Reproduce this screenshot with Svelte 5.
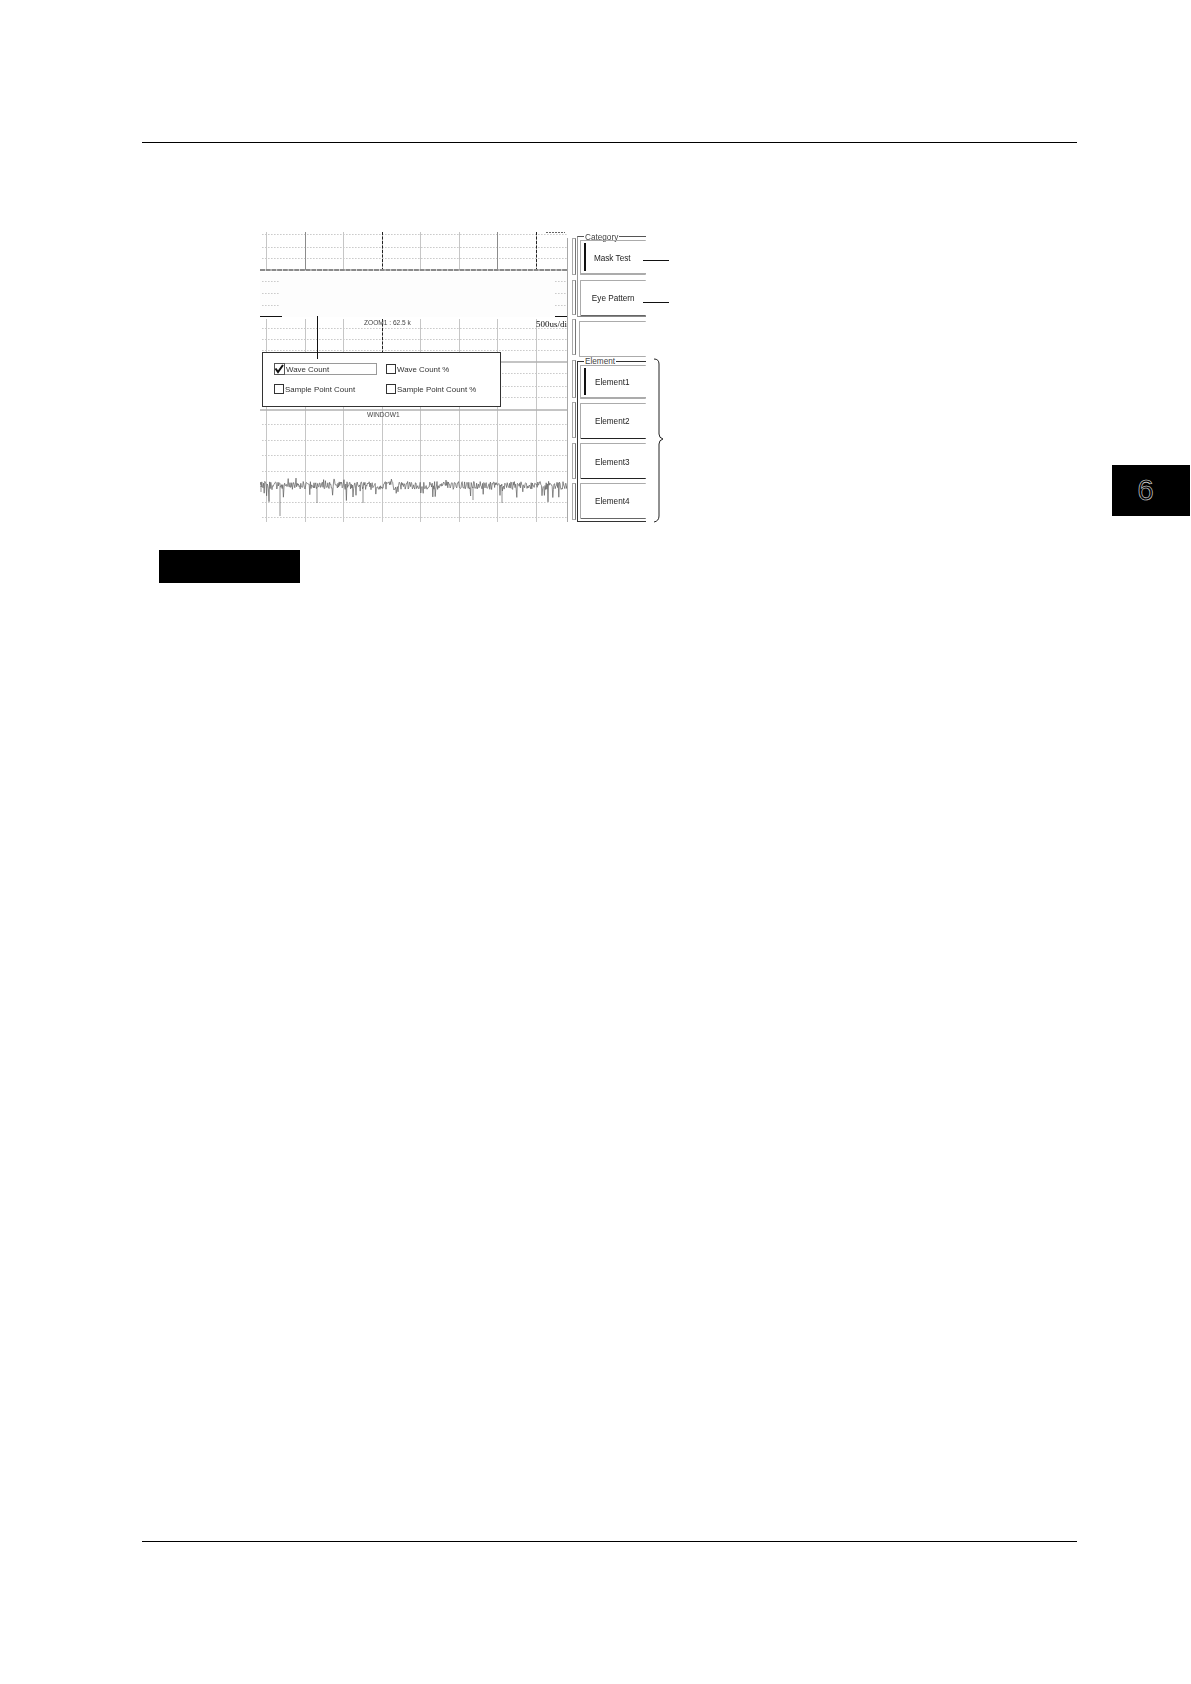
<script>
  const gridX = [266.5, 305.5, 343.5, 382.5, 420.5, 459.5, 497.5, 536.5];
  const dotsTop = [234.5, 247.5, 258.5];
  const dotsMid = [328.5, 339.5, 350.5];
  const dotsRight = [373.5, 386.5, 397.5];
  const dotsLow = [424.5, 440.5, 455.5, 471.5, 502.5, 517.5];
  const dotsBlank = [281.5, 293.5, 305.5];

  let seed = 12345;
  const rnd = () => {
    seed = (seed * 16807) % 2147483647;
    return seed / 2147483647;
  };
  let wave = 'M260 485';
  for (let x = 260.6; x < 568; x += 0.6) {
    let y = 485.5 + (rnd() - 0.5) * 8;
    const r = rnd();
    if (r > 0.93) y += 4 + rnd() * 9;
    else if (r < 0.06) y -= 2 + rnd() * 3;
    wave += ` L${x.toFixed(1)} ${y.toFixed(1)}`;
  }
  wave += ' M280 486 L280 516 M261 486 L261 492 M317 487 L317 503 M363 487 L363 503 M473 487 L473 500 M502 487 L502 503';

  const options = [
    { label: 'Wave Count', checked: true, focus: true },
    { label: 'Wave Count %' },
    { label: 'Sample Point Count' },
    { label: 'Sample Point Count %' }
  ];
  const stacks = [37, 35, 36, 38, 36, 36, 37];
</script>

<div class="page">
  <div class="rule"></div>

  <div class="figure">
    <div class="scope">
      <svg class="trace" viewBox="260 232 308 290" width="308" height="290">
        {#each dotsTop as y}<line class="dots" x1="262" x2="568" y1={y} y2={y} />{/each}
        {#each dotsMid as y}<line class="dots" x1="262" x2="568" y1={y} y2={y} />{/each}
        {#each dotsRight as y}<line class="dots" x1="502" x2="568" y1={y} y2={y} />{/each}
        {#each dotsLow as y}<line class="dots" x1="262" x2="568" y1={y} y2={y} />{/each}
        {#each gridX as x, i}
          <line class={i === 1 || i === 6 ? 'grid strong' : 'grid'} x1={x} x2={x} y1="232" y2="270" />
          <line class="grid" x1={x} x2={x} y1="319" y2="352" />
          <line class="grid" x1={x} x2={x} y1="406" y2="522" />
        {/each}
        <line class="grid" x1="536.5" x2="536.5" y1="352" y2="410" />
        <line class="cut" x1="382.5" x2="382.5" y1="232" y2="270" />
        <line class="cut" x1="536.5" x2="536.5" y1="232" y2="270" />
        <line class="cut" x1="382.5" x2="382.5" y1="319" y2="352" />
        <line class="scrap" x1="546" x2="565" y1="232.5" y2="232.5" />
        <line class="divider heavy" x1="260" x2="568" y1="270" y2="270" />
        <line class="divider" x1="500" x2="568" y1="362" y2="362" />
        <line class="divider" x1="260" x2="568" y1="410" y2="410" />
        <rect class="blank" x="260" y="272" width="308" height="45" />
        {#each dotsBlank as y}
          <line class="dots" x1="262" x2="280" y1={y} y2={y} />
          <line class="dots" x1="555" x2="568" y1={y} y2={y} />
        {/each}
        <path class="wave" d={wave} />
        <text class="tiny" x="364" y="325">ZOOM1 : 62.5 k</text>
        <text class="tiny" x="367" y="417">WINDOW1</text>
        <text class="div" x="536" y="327">500us/di</text>
        <line class="ink" x1="260" x2="282" y1="316.5" y2="316.5" />
        <line class="ink" x1="555" x2="568" y1="316.5" y2="316.5" />
      </svg>

      <div class="dialog">
        {#each options as o}
          <div class="option" class:focus={o.focus}>
            <span class="box">
              {#if o.checked}
                <svg viewBox="0 0 10 10" width="10" height="10"><path d="M1.5 4.5 L4 8 L9 1" /></svg>
              {/if}
            </span>
            <span>{o.label}</span>
          </div>
        {/each}
      </div>
      <div class="leader"></div>
    </div>

    <div class="rail">
      {#each stacks as h}
        <div class="stub" style="height: {h}px"></div>
      {/each}
    </div>

    <div class="keys">
      <div class="group category">
        <span class="legend">Category</span>
        <div class="key selected low"><i></i>Mask Test</div>
        <div class="key dark-gray nudge">Eye Pattern</div>
      </div>
      <div class="key empty"></div>
      <div class="group element">
        <span class="legend">Element</span>
        <div class="key selected"><i></i><span class="lift">Element1</span></div>
        <div class="key black">Element2</div>
        <div class="key black"><span class="lift">Element3</span></div>
        <div class="key dark-gray">Element4</div>
      </div>
    </div>

    <svg class="notes" viewBox="640 232 32 290" width="32" height="290">
      <line x1="643" x2="669" y1="260.5" y2="260.5" />
      <line x1="643" x2="669" y1="302.5" y2="302.5" />
    </svg>
    <svg class="brace" viewBox="650 355 18 170" width="18" height="170">
      <path d="M654 359 Q659 359 659 364 L659 434 Q659 438 663 439 Q659 440 659 444 L659 516 Q659 521 654 522" />
    </svg>
  </div>

  <div class="bar"></div>
  <div class="rule bottom"></div>

  <div class="tab"><span>6</span></div>
</div>

<style>
  :global(body) {
    margin: 0;
    background: #fff;
  }
  .page {
    position: relative;
    box-sizing: border-box;
    height: 1684px;
    padding: 142px 0;
    display: flex;
    flex-direction: column;
    font-family: "Liberation Sans", Arial, sans-serif;
    color: #222;
    overflow: hidden;
  }
  .rule {
    width: 935px;
    height: 1px;
    margin-left: 142px;
    background: #000;
    flex: none;
  }
  .bottom {
    margin-top: auto;
  }
  .figure {
    position: relative;
    display: flex;
    margin: 89px 0 0 260px;
    height: 290px;
    width: 412px;
    flex: none;
    filter: blur(0.35px);
  }
  .scope {
    position: relative;
    width: 307px;
    flex: none;
  }
  .trace {
    display: block;
  }
  .dots {
    stroke: #cbcbcb;
    stroke-width: 1;
    stroke-dasharray: 1.6 1.4;
  }
  .grid {
    stroke: #c6c6c6;
    stroke-width: 1;
  }
  .grid.strong {
    stroke: #8c8c8c;
  }
  .cut {
    stroke: #222;
    stroke-width: 1;
    stroke-dasharray: 3 1.5;
  }
  .scrap {
    stroke: #666;
    stroke-width: 1;
    stroke-dasharray: 2 1;
  }
  .divider {
    stroke: #b0b0b0;
    stroke-width: 1.5;
  }
  .divider.heavy {
    stroke: #8a8a8a;
    stroke-width: 2;
    stroke-dasharray: 5 0.7;
  }
  .blank {
    fill: #fdfdfd;
  }
  .wave {
    fill: none;
    stroke: #5f5f5f;
    stroke-width: 0.7;
  }
  .ink {
    stroke: #111;
    stroke-width: 1;
  }
  .leader {
    position: absolute;
    left: 57px;
    top: 84px;
    width: 1px;
    height: 43px;
    background: #111;
  }
  .tiny {
    font-family: "Liberation Sans", Arial, sans-serif;
    font-size: 6.6px;
    fill: #444;
  }
  .div {
    font-family: "Liberation Serif", "Times New Roman", serif;
    font-size: 9px;
    fill: #111;
  }
  .dialog {
    position: absolute;
    left: 2px;
    top: 120px;
    box-sizing: border-box;
    width: 239px;
    height: 55px;
    padding: 10px 0 0 11px;
    background: #fff;
    border: 1.5px solid #333;
    display: grid;
    grid-template-columns: 112px 1fr;
    grid-auto-rows: 20px;
    font-size: 7.9px;
    color: #333;
  }
  .option {
    display: flex;
    align-items: center;
    gap: 1px;
    height: 12px;
    white-space: nowrap;
  }
  .option.focus {
    width: 103px;
    margin-right: 9px;
    box-shadow: inset 0 0 0 1px #9a9a9a;
  }
  .box {
    box-sizing: border-box;
    width: 10px;
    height: 10px;
    border: 1px solid #333;
    background: #fff;
    flex: none;
    display: flex;
  }
  .option.focus .box {
    width: 11px;
    height: 12px;
    border: 1.5px solid #555;
    align-items: center;
  }
  .box svg {
    margin-left: -1px;
  }
  .box path {
    fill: none;
    stroke: #111;
    stroke-width: 2;
  }
  .rail {
    box-sizing: border-box;
    width: 10px;
    margin-top: 6px;
    padding-left: 4px;
    height: 284px;
    border-left: 1.5px solid #a8a8a8;
    flex: none;
    display: flex;
    flex-direction: column;
    gap: 4.5px;
    position: relative;
  }
  .stub {
    width: 4px;
    box-sizing: border-box;
    border: 1px solid #aaa;
    border-right-color: #777;
    flex: none;
  }
  .keys {
    width: 69px;
    flex: none;
    overflow: hidden;
    padding-top: 4px;
    display: flex;
    flex-direction: column;
    font-size: 8.2px;
    color: #222;
  }
  .group {
    position: relative;
    box-sizing: border-box;
    border: 1.5px solid #333;
    border-right: none;
    padding: 3px 0 1px 1.5px;
    display: flex;
    flex-direction: column;
    gap: 5px;
  }
  .category {
    height: 81px;
    border-color: #555;
    border-left-color: #999;
    border-bottom-color: #888;
  }
  .element {
    height: 162px;
    margin-top: 4px;
    border-color: #333;
    gap: 4px;
  }
  .legend {
    position: absolute;
    left: 6px;
    top: -4.5px;
    padding: 0 1px;
    height: 10px;
    line-height: 10px;
    background: #fff;
    color: #444;
  }
  .element .legend {
    top: -5.5px;
  }
  .key {
    position: relative;
    box-sizing: border-box;
    height: 36px;
    flex: none;
    display: flex;
    align-items: center;
    justify-content: center;
    padding-right: 2px;
    white-space: nowrap;
    border: 1.5px solid #ababab;
    border-right: none;
    border-radius: 1px;
  }
  .key.empty {
    margin: 4px 0 0 2px;
    height: 36px;
  }
  .key.selected {
    height: 34px;
    border-bottom-width: 2px;
  }
  .key.low {
    height: 35px;
    padding-top: 3px;
  }
  .key.nudge {
    padding-right: 0;
  }
  .lift {
    position: relative;
    top: 1px;
  }
  .key.dark-gray {
    border-bottom-color: #666;
  }
  .key.black {
    border-bottom-color: #222;
  }
  .key i {
    position: absolute;
    left: 3px;
    top: 2px;
    bottom: 2px;
    width: 2px;
    background: #111;
  }
  .notes {
    position: absolute;
    left: 380px;
    top: 0;
  }
  .notes line {
    stroke: #111;
    stroke-width: 1;
  }
  .brace {
    position: absolute;
    left: 390px;
    top: 123px;
  }
  .brace path {
    fill: none;
    stroke: #222;
    stroke-width: 1;
  }
  .bar {
    width: 141px;
    height: 33px;
    margin: 28px 0 0 159px;
    background: #000;
    flex: none;
  }
  .tab {
    position: absolute;
    left: 1112px;
    top: 465px;
    width: 78px;
    height: 51px;
    padding-right: 11px;
    box-sizing: border-box;
    background: #000;
    display: flex;
    align-items: center;
    justify-content: center;
  }
  .tab span {
    font-size: 29px;
    line-height: 1;
    color: #000;
    -webkit-text-stroke: 0.6px #e4e4e4;
  }
</style>
